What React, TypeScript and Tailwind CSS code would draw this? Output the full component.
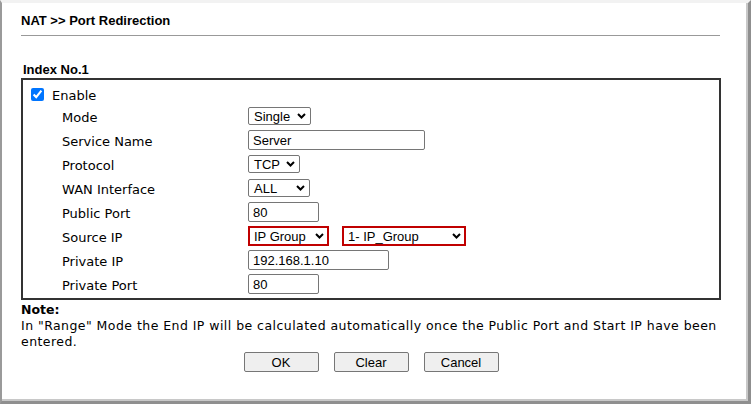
import type { ReactNode } from 'react';

const label = "font-['DejaVu_Sans',sans-serif] text-[13px] text-black";
const control = "font-['Liberation_Sans',Arial,sans-serif] text-[13px] text-black";

function Chevron() {
  return (
    <svg width="9" height="6" viewBox="0 0 9 6" className="shrink-0">
      <path d="M1 1 L4.5 4.5 L8 1" fill="none" stroke="#000" strokeWidth="2" />
    </svg>
  );
}

function Select({ value, width, red = false }: { value: string; width: string; red?: boolean }) {
  return (
    <div
      className={`${control} ${width} ${
        red ? 'h-[20px] border-2 border-[#c00000] pl-[4px] pr-[3px]' : 'h-[18px] border border-[#767676] rounded-[2px] pl-[5px] pr-[4px]'
      } flex items-center justify-between bg-white leading-none`}
    >
      <span>{value}</span>
      <Chevron />
    </div>
  );
}

function TextBox({ value, width }: { value: string; width: string }) {
  return (
    <div
      className={`${control} ${width} h-[20px] border border-[#767676] rounded-[2px] pl-[4px] flex items-center bg-white leading-none`}
    >
      {value}
    </div>
  );
}

function Row({ name, children }: { name: string; children: ReactNode }) {
  return (
    <div className="flex items-center h-[24px]">
      <div className={`${label} w-[186px] pl-[39px] shrink-0 box-content leading-none pt-[2px]`}>{name}</div>
      <div className="flex items-center gap-[13px]">{children}</div>
    </div>
  );
}

function Button({ text }: { text: string }) {
  return (
    <button
      type="button"
      className={`${control} w-[75px] h-[20px] border border-[#767676] rounded-[2px] bg-[#efefef] leading-none`}
    >
      {text}
    </button>
  );
}

export default function App() {
  return (
    <div className="w-[751px] h-[404px] flex bg-white border-t-[3px] border-t-[#f2f2f2] border-l-2 border-l-[#9a9a9a] border-r-[3px] border-r-[#8f8f8f] border-b-[3px] border-b-[#8f8f8f]">
      <div className="flex-1 border-r-2 border-b-2 border-[#c8c8c8] pl-[19px]">
        <h1 className="mt-[10px] h-[15px] leading-[15px] font-['Liberation_Sans',Arial,sans-serif] text-[13px] font-bold text-black">
          NAT &gt;&gt; Port Redirection
        </h1>
        <div className="mt-[7px] w-[699px] h-px bg-[#999999]" />
        <div className="mt-[26px] h-[15px] leading-[15px] pl-[2px] font-['Liberation_Sans',Arial,sans-serif] text-[13px] font-bold text-black">
          Index No.1
        </div>

        <div className="mt-px w-[700px] h-[222px] border-2 border-[#333333] pt-[4px]">
          <div className="flex items-center h-[20px] pl-[8px] gap-[8px]">
            <input type="checkbox" defaultChecked className="m-0 w-[13px] h-[13px] accent-[#0075ff]" />
            <span className={`${label} leading-none pt-[2px]`}>Enable</span>
          </div>
          <Row name="Mode">
            <Select value="Single" width="w-[63px]" />
          </Row>
          <Row name="Service Name">
            <TextBox value="Server" width="w-[177px]" />
          </Row>
          <Row name="Protocol">
            <Select value="TCP" width="w-[52px]" />
          </Row>
          <Row name="WAN Interface">
            <Select value="ALL" width="w-[62px]" />
          </Row>
          <Row name="Public Port">
            <TextBox value="80" width="w-[71px]" />
          </Row>
          <Row name="Source IP">
            <Select value="IP Group" width="w-[81px]" red />
            <Select value="1- IP_Group" width="w-[124px]" red />
          </Row>
          <Row name="Private IP">
            <TextBox value="192.168.1.10" width="w-[141px]" />
          </Row>
          <Row name="Private Port">
            <TextBox value="80" width="w-[71px]" />
          </Row>
        </div>

        <div className="mt-[2px] w-[700px] font-['DejaVu_Sans',sans-serif] text-[12.5px] tracking-[0.45px] leading-[16px] text-black">
          <div className="font-bold tracking-normal">Note:</div>
          <div>
            In "Range" Mode the End IP will be calculated automatically once the Public Port and Start IP have been
            entered.
          </div>
        </div>

        <div className="mt-[2px] w-[700px] flex justify-center gap-[15px]">
          <Button text="OK" />
          <Button text="Clear" />
          <Button text="Cancel" />
        </div>
      </div>
    </div>
  );
}
